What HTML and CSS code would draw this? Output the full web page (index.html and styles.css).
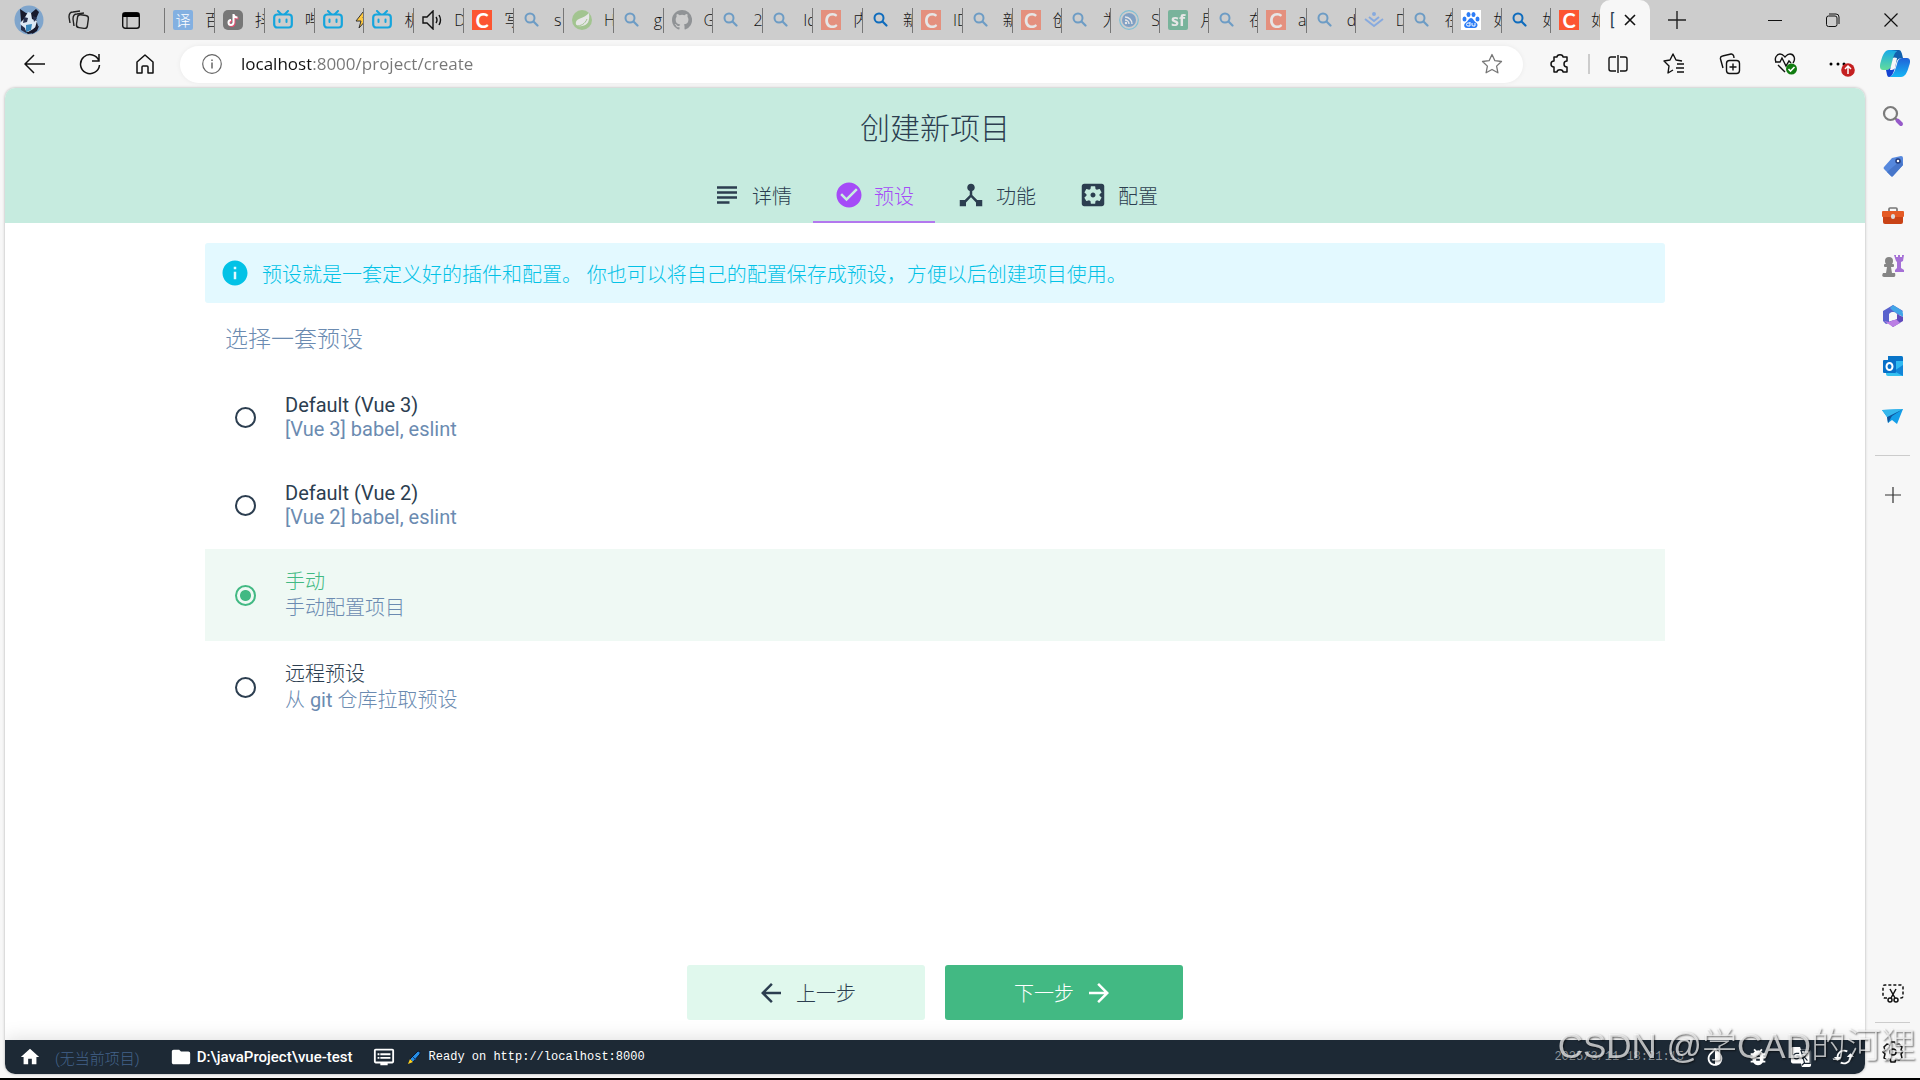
FILE: index.html
```html
<!DOCTYPE html>
<html lang="zh-CN">
<head>
	<meta charset="UTF-8">
	<meta name="viewport" content="width=device-width, initial-scale=1.0">
	<title>创建新项目</title>
	<link rel="stylesheet" href="styles.css">
</head>
<body>
<!-- 公用图标 -->
<svg class="sprite" aria-hidden="true">
	<symbol id="search" viewBox="0 0 20 20"><circle cx="8" cy="8" r="4.500" fill="none" stroke="currentColor" stroke-width="2"/><path d="M11.500 11.500l4 4" stroke="currentColor" stroke-width="2.200" stroke-linecap="round"/></symbol>
	<symbol id="bili" viewBox="0 0 20 20"><path d="M5 1l3 3M15 1l-3 3" stroke="#15a5dd" stroke-width="2" stroke-linecap="round"/><rect x="1.200" y="4.500" width="17.600" height="13" rx="3" fill="none" stroke="#15a5dd" stroke-width="2.200"/><path d="M6.500 9.500v2.500M13.500 9.500v2.500" stroke="#15a5dd" stroke-width="2" stroke-linecap="round"/></symbol>
</svg>

<div class="browser">
	<!-- 标签栏 -->
	<header class="tab-strip">
		<div class="strip-tools">
			<button class="tool" aria-label="用户"><svg width="30" height="30" viewBox="0 0 30 30"><circle cx="15" cy="15" r="14.500" fill="#7fa5cc"/><path d="M6 4l6 4 4 1 6-5 3 3-3 7 2 7-4 7-6 1-6-5-1-9z" fill="#17192b"/><path d="M14 7l3 1 1 6 5 2-2 7-7 4-5-3-3-6 4-4z" fill="#dce8f4"/><path d="M10 12l4 1-1 4-4 1zM19 11l4 2-3 4zM7 20l4 3 1 5-5-3z" fill="#27304e"/><path d="M12 20l6-1-1 6-5 2z" fill="#3987bc"/><path d="M20 23l5-2-2 5-5 3z" fill="#17192b"/></svg></button>
			<button class="tool" aria-label="工作区"><svg width="24" height="24" viewBox="0 0 24 24" fill="none" stroke="#222" stroke-width="1.400"><rect x="9" y="7" width="11" height="13" rx="3" transform="rotate(8 14 13)"/><path d="M6 18l-1-7c0-3 1-5 4-5l7-1M2 15L1 9c0-3 1-5 4-5l7-1"/></svg></button>
			<button class="tool" aria-label="标签页操作"><svg width="20" height="20" viewBox="0 0 20 20"><rect x="1.700" y="2.700" width="16.600" height="15.600" rx="2.500" fill="none" stroke="#111" stroke-width="1.400"/><path d="M2 3h16v4H2z"/><path d="M6 7v11" stroke="#111"/></svg></button>
		</div>
		<nav class="tabs">
			<button class="tab"><span class="fav translate">译</span>百</button>
			<button class="tab"><span class="fav tiktok"><svg width="20" height="20" viewBox="0 0 20 20" fill="none" stroke-width="2"><path d="M10.500 4v8.500a2.500 2.500 0 1 1-2.500-2.500M10.500 4.500c.5 2 2 3 4 3" stroke="#e35272" transform="translate(1 1)"/><path d="M10.500 4v8.500a2.500 2.500 0 1 1-2.500-2.500M10.500 4.500c.5 2 2 3 4 3" stroke="#fff"/></svg></span>抖</button>
			<button class="tab"><svg class="fav"><use href="#bili"/></svg>哔</button>
			<button class="tab"><svg class="fav"><use href="#bili"/></svg><svg class="bolt" viewBox="0 0 14 18"><path d="M8 1L1 10h5l-2 7 9-10H8l2-6z" fill="#ffc83d" stroke="#333"/></svg></button>
			<button class="tab"><svg class="fav"><use href="#bili"/></svg>机</button>
			<button class="tab"><svg class="fav" viewBox="0 0 20 20" fill="none" stroke="#111" stroke-width="1.400"><path d="M1 7h4l6-6v18l-6-6H1zM14 7q2 3 0 6M17 5q3 5 0 10"/></svg>D</button>
			<button class="tab"><span class="fav csdn">C</span>写</button>
			<button class="tab"><svg class="fav find dim"><use href="#search"/></svg>s</button>
			<button class="tab"><svg class="fav dim" viewBox="0 0 20 20"><circle cx="10" cy="10" r="10" fill="#79bd55"/><path d="M17 3c1 8-1 12-7 13-4 1-7-1-6-4 1-4 7-3 13-9z" fill="#fff"/><path d="M4 16c5 0 9-2 11-7" fill="none" stroke="#79bd55"/></svg>H</button>
			<button class="tab"><svg class="fav find dim"><use href="#search"/></svg>g</button>
			<button class="tab"><svg class="fav dim" viewBox="0 0 16 16"><path fill="#555b60" d="M8 0C3.580 0 0 3.580 0 8c0 3.540 2.290 6.530 5.470 7.590.4.070.55-.17.55-.38v-1.490c-2.010.37-2.530-.49-2.690-.94-.09-.23-.48-.94-.82-1.130-.28-.15-.68-.52-.01-.53.63-.01 1.080.58 1.230.82.72 1.210 1.870.87 2.330.66.070-.52.28-.87.51-1.070-1.780-.2-3.640-.89-3.640-3.950 0-.87.31-1.590.82-2.150-.08-.2-.36-1.020.08-2.120 0 0 .67-.21 2.200.82a7.600 7.600 0 0 1 4 0c1.530-1.040 2.200-.82 2.200-.82.44 1.100.16 1.920.08 2.120.51.56.82 1.270.82 2.150 0 3.070-1.870 3.750-3.650 3.950.29.25.54.73.54 1.480v2.200c0 .21.15.46.55.38A8 8 0 0 0 8 0z"/></svg>G</button>
			<button class="tab"><svg class="fav find dim"><use href="#search"/></svg>2</button>
			<button class="tab"><svg class="fav find dim"><use href="#search"/></svg>Id</button>
			<button class="tab"><span class="fav csdn dim">C</span>内</button>
			<button class="tab"><svg class="fav find"><use href="#search"/></svg>新</button>
			<button class="tab"><span class="fav csdn dim">C</span>ID</button>
			<button class="tab"><svg class="fav find dim"><use href="#search"/></svg>新</button>
			<button class="tab"><span class="fav csdn dim">C</span>创</button>
			<button class="tab narrow"><svg class="fav find dim"><use href="#search"/></svg>为</button>
			<button class="tab narrow"><svg class="fav dim" viewBox="0 0 20 20" fill="none"><circle cx="10" cy="10" r="9.300" stroke="#33b2dd" stroke-width="1.200"/><circle cx="10" cy="10" r="7" fill="#3575bd"/><path d="M6 10a4 4 0 0 1 4 4M6 7a7 7 0 0 1 7 7" stroke="#fff" stroke-width="1.400"/><circle cx="7" cy="13" r="1.200" fill="#fff"/></svg>S</button>
			<button class="tab narrow"><span class="fav sf dim">sf</span>月</button>
			<button class="tab narrow"><svg class="fav find dim"><use href="#search"/></svg>在</button>
			<button class="tab narrow"><span class="fav csdn dim">C</span>a</button>
			<button class="tab narrow"><svg class="fav find dim"><use href="#search"/></svg>d</button>
			<button class="tab narrow"><svg class="fav dim" viewBox="0 0 20 20" fill="none" stroke="#4488ef" stroke-width="2"><path d="M1 9l9 7 9-7M5 7l5 4 5-4"/><circle cx="10" cy="4" r="1" fill="#4488ef"/></svg>D</button>
			<button class="tab narrow"><svg class="fav find dim"><use href="#search"/></svg>在</button>
			<button class="tab narrow"><svg class="fav" viewBox="0 0 20 20"><path d="M0 0h20v20H0z" fill="#fff"/><g fill="#2d7df6"><ellipse cx="3.500" cy="9" rx="2" ry="2.500"/><ellipse cx="7.500" cy="4.500" rx="2" ry="2.500"/><ellipse cx="12.500" cy="4.500" rx="2" ry="2.500"/><ellipse cx="16.500" cy="9" rx="2" ry="2.500"/><path d="M10 8c2 0 3 3 5 4.500 3 2 1 5.500-1 5.500H6c-3 0-4-3.500-1-5.500C7 11 8 8 10 8z"/></g><path d="M9 12v4H7a1.500 1.500 0 0 1 0-3h2M11 13v2q0 1 1 1h2v-3" fill="none" stroke="#fff"/></svg>如</button>
			<button class="tab narrow"><svg class="fav find"><use href="#search"/></svg>如</button>
			<button class="tab narrow"><span class="fav csdn">C</span>如</button>
		</nav>
		<button class="tab-active"><span>[</span><svg width="12" height="12" viewBox="0 0 12 12"><path d="M1 1l10 10M11 1L1 11" stroke="#111" stroke-width="1.600"/></svg></button>
		<button class="new-tab" aria-label="新建标签页"><svg width="18" height="18" viewBox="0 0 18 18"><path d="M9 0v18M0 9h18" stroke="#222" stroke-width="1.400"/></svg></button>
		<div class="window-controls">
			<button class="tool" aria-label="最小化"><svg width="14" height="14" viewBox="0 0 14 14"><path d="M0 7.500h14" stroke="#111"/></svg></button>
			<button class="tool" aria-label="还原"><svg width="14" height="14" viewBox="0 0 14 14" fill="none" stroke="#111"><rect x=".5" y="3" width="10.500" height="10.500" rx="2"/><path d="M3 1h7q3 0 3 3v7"/></svg></button>
			<button class="tool" aria-label="关闭"><svg width="14" height="14" viewBox="0 0 14 14"><path d="M.5.5l13 13M13.500.5l-13 13" stroke="#111" stroke-width="1.200"/></svg></button>
		</div>
	</header>

	<!-- 地址栏 -->
	<div class="toolbar">
		<div class="nav-buttons">
			<button class="tool" aria-label="后退"><svg width="22" height="22" viewBox="0 0 22 22" fill="none" stroke="#111" stroke-width="1.500"><path d="M21 11H2M10 2l-9 9 9 9"/></svg></button>
			<button class="tool" aria-label="刷新"><svg width="22" height="22" viewBox="0 0 22 22" fill="none" stroke="#111" stroke-width="1.500"><path d="M20 8A9.500 9.500 0 1 0 20.500 12M20 1v7h-7"/></svg></button>
			<button class="tool" aria-label="主页"><svg width="20" height="20" viewBox="0 0 20 20" fill="none" stroke="#111" stroke-width="1.500"><path d="M2 8l8-7 8 7v11h-5v-6q0-1-1-1H8q-1 0-1 1v6H2z" stroke-linejoin="round"/></svg></button>
		</div>
		<div class="address">
			<svg width="20" height="20" viewBox="0 0 20 20" fill="none" stroke="#666" stroke-width="1.200"><circle cx="10" cy="10" r="9.300"/><path d="M10 8.500v6M10 5.500v1.500" stroke-width="1.500"/></svg>
			<input class="address-input" type="text" aria-label="地址" value="localhost:8000/project/create">
			<button class="tool" aria-label="收藏"><svg width="22" height="22" viewBox="0 0 22 22" fill="none" stroke="#777" stroke-width="1.300" stroke-linejoin="round"><path d="M11 1.500l2.900 6.200 6.600.8-4.900 4.600 1.300 6.700-5.900-3.300-5.900 3.300 1.300-6.700-4.900-4.600 6.600-.8z"/></svg></button>
		</div>
		<div class="toolbar-actions">
			<button class="tool" aria-label="扩展"><svg width="20" height="20" viewBox="0 0 20 20" fill="none" stroke="#111" stroke-width="1.500" stroke-linejoin="round"><path d="M4 3h3c0-3 6-3 6 0h4v4c-4 0-4 6 0 6v5h-4c0-3-6-3-6 0H4v-5c-4 0-4-6 0-6z"/></svg></button>
			<span class="divider"></span>
			<button class="tool" aria-label="分屏"><svg width="20" height="20" viewBox="0 0 20 20" fill="none" stroke="#111" stroke-width="1.400"><path d="M8 3H3Q1 3 1 5v10q0 2 2 2h5M12 3h5q2 0 2 2v10q0 2-2 2h-5M10 1v18"/></svg></button>
			<button class="tool" aria-label="收藏夹"><svg width="22" height="22" viewBox="0 0 22 22" fill="none" stroke="#111" stroke-width="1.400" stroke-linejoin="round"><path d="M10 17l-5 3 1-7-5-5 6-1 3-6 3 6 6 1M14 11h7M13 15h8M14 19h7"/></svg></button>
			<button class="tool" aria-label="集锦"><svg width="22" height="22" viewBox="0 0 22 22" fill="none" stroke="#111" stroke-width="1.400"><rect x="7.500" y="7.500" width="13" height="13" rx="3"/><path d="M14 10.500v7M10.500 14h7M4 15L1.500 6Q1 3.500 3.500 3L12 1q2-.3 2.700 2L15 5"/></svg></button>
			<button class="tool" aria-label="浏览器概要"><svg width="24" height="24" viewBox="0 0 24 24" fill="none" stroke="#111" stroke-width="1.400"><path d="M2 10C0 6 3 2 6 2c3 0 4 2 5 3 1-1 2-3 5-3 4 0 6 5 3 9M1 10h5l2-4 4 8 3-5 2 2M4 13l7 7"/><circle cx="17.500" cy="17" r="5.500" fill="#107c10" stroke="none"/><path d="M14.500 17l2 2 4-4" stroke="#fff" stroke-width="1.600"/></svg></button>
			<button class="tool" aria-label="设置及其他"><svg width="26" height="26" viewBox="0 0 26 26"><circle cx="2" cy="13" r="1.500"/><circle cx="9" cy="13" r="1.500"/><circle cx="15" cy="13" r="1.500"/><circle cx="19" cy="19" r="6.800" fill="#c42021"/><path d="M19 23v-8M16 18l3-3 3 3" fill="none" stroke="#fff" stroke-width="1.500"/></svg></button>
			<button class="tool copilot" aria-label="Copilot"><svg width="30" height="28" viewBox="0 0 30 28"><defs><linearGradient id="cp1" x2="0" y2="1"><stop stop-color="#16a9e8"/><stop offset="1" stop-color="#63dc9b"/></linearGradient><linearGradient id="cp2" x2="0" y2="1"><stop stop-color="#2062d8"/><stop offset="1" stop-color="#16b5f4"/></linearGradient></defs><path d="M9 0h10c-3 0-5 7-7 14-1 5-3 6-6 6H3c-3 0-4-3-2-9C3 4 5 0 9 0z" fill="url(#cp1)"/><path d="M21 27H9c4-1 6-6 8-13 1-5 3-6 6-6h4c3 0 4 3 2 8-2 7-4 11-8 11z" fill="url(#cp2)"/><path d="M11 0h8c2 0 3 3 4 8-5 0-6 2-7 6h-4C13 8 14 3 17 1z" fill="#1261ae"/><path d="M6 20c3 0 5-2 6-6h4c-2 8-4 13-7 13-2 0-2-3-3-7z" fill="#1444d2"/><path d="M13 8q1-1 4 0l-2 10q-1 2-5 2z" fill="#f7f7f7"/></svg></button>
		</div>
	</div>

	<div class="workspace">
		<main class="page">
			<!-- 向导标题和步骤 -->
			<div class="page-header">
				<h1 class="page-title">创建新项目</h1>
				<nav class="steps">
					<button class="step"><svg class="icon" viewBox="0 0 24 24"><path d="M14 17H4v2h10v-2zm6-8H4v2h16V9zM4 15h16v-2H4v2zM4 5v2h16V5H4z"/></svg>详情</button>
					<button class="step active"><svg class="icon" viewBox="0 0 24 24"><path d="M12 2C6.480 2 2 6.480 2 12s4.480 10 10 10 10-4.480 10-10S17.520 2 12 2zm-2 15l-5-5 1.410-1.410L10 14.170l7.590-7.590L19 8l-9 9z"/></svg>预设</button>
					<button class="step"><svg class="icon" viewBox="0 0 24 24"><path d="M17 16l-4-4V8.820C14.160 8.400 15 7.300 15 6c0-1.660-1.340-3-3-3S9 4.340 9 6c0 1.300.84 2.400 2 2.820V12l-4 4H3v5h5v-3.050l4-4.200 4 4.200V21h5v-5h-4z"/></svg>功能</button>
					<button class="step"><svg class="icon" viewBox="0 0 24 24"><path d="M12 10c-1.100 0-2 .9-2 2s.9 2 2 2 2-.9 2-2-.9-2-2-2zm7-7H5c-1.110 0-2 .9-2 2v14c0 1.100.89 2 2 2h14c1.110 0 2-.9 2-2V5c0-1.100-.89-2-2-2zm-1.750 9c0 .23-.02.46-.05.68l1.480 1.160c.13.11.17.3.08.45l-1.400 2.420c-.09.15-.27.21-.43.15l-1.740-.7c-.36.28-.76.51-1.180.69l-.26 1.850c-.03.17-.18.3-.35.3h-2.800c-.17 0-.32-.13-.35-.29l-.26-1.850c-.43-.18-.82-.41-1.180-.69l-1.740.7c-.16.06-.34 0-.43-.15l-1.400-2.420c-.09-.15-.05-.34.08-.45l1.480-1.160c-.03-.23-.05-.46-.05-.69 0-.23.02-.46.05-.68l-1.480-1.160c-.13-.11-.17-.3-.08-.45l1.400-2.420c.09-.15.27-.21.43-.15l1.740.7c.36-.28.76-.51 1.180-.69l.26-1.850c.03-.17.18-.3.35-.3h2.800c.17 0 .32.13.35.29l.26 1.850c.43.18.82.41 1.180.69l1.740-.7c.16-.06.34 0 .43.15l1.400 2.420c.09.15.05.34-.08.45l-1.480 1.160c.03.23.05.46.05.69z"/></svg>配置</button>
				</nav>
			</div>

			<!-- 预设列表 -->
			<div class="content">
				<div class="info-banner">
					<svg class="icon" viewBox="0 0 24 24"><path d="M12 2C6.480 2 2 6.480 2 12s4.480 10 10 10 10-4.480 10-10S17.520 2 12 2zm1 15h-2v-6h2v6zm0-8h-2V7h2v2z"/></svg>
					<span>预设就是一套定义好的插件和配置。 你也可以将自己的配置保存成预设，方便以后创建项目使用。</span>
				</div>
				<h2 class="list-title">选择一套预设</h2>
				<label class="preset latin">
					<input type="radio" name="preset">
					<span class="preset-text"><span class="preset-name">Default (Vue 3)</span><span class="preset-desc">[Vue 3] babel, eslint</span></span>
				</label>
				<label class="preset latin">
					<input type="radio" name="preset">
					<span class="preset-text"><span class="preset-name">Default (Vue 2)</span><span class="preset-desc">[Vue 2] babel, eslint</span></span>
				</label>
				<label class="preset selected">
					<input type="radio" name="preset" checked>
					<span class="preset-text"><span class="preset-name">手动</span><span class="preset-desc">手动配置项目</span></span>
				</label>
				<label class="preset">
					<input type="radio" name="preset">
					<span class="preset-text"><span class="preset-name">远程预设</span><span class="preset-desc">从 <span class="word">git</span> 仓库拉取预设</span></span>
				</label>
			</div>

			<div class="actions">
				<button class="action"><svg class="icon" viewBox="0 0 24 24"><path d="M20 11H7.830l5.590-5.590L12 4l-8 8 8 8 1.410-1.410L7.830 13H20v-2z"/></svg>上一步</button>
				<button class="action primary">下一步<svg class="icon" viewBox="0 0 24 24"><path d="M12 4l-1.410 1.410L16.170 11H4v2h12.170l-5.580 5.590L12 20l8-8z"/></svg></button>
			</div>

			<!-- 底部状态栏 -->
			<footer class="status-bar">
				<svg class="status-icon" viewBox="0 0 24 24"><path d="M10 20v-6h4v6h5v-8h3L12 3 2 12h3v8z"/></svg>
				<span class="no-project">(无当前项目)</span>
				<svg class="status-icon folder" viewBox="0 0 24 24"><path d="M10 4H4c-1.100 0-1.990.9-1.990 2L2 18c0 1.100.9 2 2 2h16c1.100 0 2-.9 2-2V8c0-1.100-.9-2-2-2h-8l-2-2z"/></svg>
				<span class="cwd">D:\javaProject\vue-test</span>
				<svg class="status-icon log" viewBox="0 0 24 24"><path d="M21 3H3c-1.100 0-2 .9-2 2v12c0 1.100.9 2 2 2h5v2h8v-2h5c1.100 0 1.990-.9 1.990-2L23 5c0-1.100-.9-2-2-2zm0 14H3V5h18v12zm-2-9H8v2h11V8zm0 4H8v2h11v-2zM7 8H5v2h2V8zm0 4H5v2h2v-2z"/></svg>
				<svg class="pen" viewBox="0 0 14 14"><path d="M3 9l8-8q3 0 2 3L6 12z" fill="#258de5" stroke="#0a1730"/><path d="M3 9l3 3-5 2z" fill="#ffd21e"/><path d="M6 7l3 3" stroke="#133b75"/></svg>
				<span class="mono">Ready on http://localhost:8000</span>
				<span class="mono log-date">2025/3/11 18:21:15</span>
				<div class="status-actions">
					<svg class="status-icon" viewBox="0 0 24 24"><path d="M17.660 7.930L12 2.270 6.340 7.930c-3.120 3.120-3.120 8.190 0 11.310C7.900 20.800 9.950 21.580 12 21.580c2.050 0 4.100-.78 5.660-2.340 3.120-3.120 3.120-8.190 0-11.310zM12 19.590c-1.600 0-3.110-.62-4.240-1.760C6.620 16.690 6 15.190 6 13.590s.62-3.110 1.760-4.240L12 5.100v14.490z"/></svg>
					<svg class="status-icon" viewBox="0 0 24 24"><path d="M20 8h-2.810c-.45-.78-1.070-1.450-1.820-1.960L17 4.410 15.590 3l-2.170 2.170C12.960 5.060 12.490 5 12 5c-.49 0-.96.06-1.410.17L8.410 3 7 4.410l1.620 1.630C7.880 6.550 7.260 7.220 6.810 8H4v2h2.090c-.05.33-.09.66-.09 1v1H4v2h2v1c0 .34.04.67.09 1H4v2h2.810c1.040 1.790 2.970 3 5.190 3s4.150-1.210 5.190-3H20v-2h-2.090c.05-.33.09-.66.09-1v-1h2v-2h-2v-1c0-.34-.04-.67-.09-1H20V8zm-6 8h-4v-2h4v2zm0-4h-4v-2h4v2z"/></svg>
					<svg class="status-icon" viewBox="0 0 24 24"><path d="M3 1h8l1 3h9q2 0 2 2v15q0 2-2 2h-8l-1-4H3q-2 0-2-2V3q0-2 2-2z"/><path d="M10 8H7a3 3 0 1 0 3 3H7M13 8h6M16 6v2M18 8c-1 4-3 5-5 6M14 10l5 6M13 21l3-3M12 5l4 14h6V5z" fill="none" stroke="#1d2935" stroke-width="1.300"/></svg>
					<svg class="status-icon" viewBox="0 0 24 24"><path d="M19 8l-4 4h3c0 3.310-2.690 6-6 6-1.010 0-1.970-.25-2.800-.7l-1.460 1.460C8.970 19.540 10.430 20 12 20c4.420 0 8-3.580 8-8h3l-4-4zM6 12c0-3.310 2.690-6 6-6 1.010 0 1.970.25 2.800.7l1.460-1.460C15.030 4.460 13.570 4 12 4c-4.420 0-8 3.580-8 8H1l4 4 4-4H6z"/></svg>
				</div>
			</footer>
		</main>

		<!-- 浏览器侧边栏 -->
		<aside class="sidebar">
			<div class="side-group">
				<button class="side-item" aria-label="搜索"><svg width="22" height="22" viewBox="0 0 22 22" fill="none"><circle cx="8.500" cy="8.500" r="6.500" stroke="#7b7b7b" stroke-width="2.200"/><path d="M13 13l3 3" stroke="#777" stroke-width="2"/><path d="M15.500 15.500l3.500 3.500" stroke="#965ac9" stroke-width="4" stroke-linecap="round"/></svg></button>
				<button class="side-item" aria-label="购物"><svg width="22" height="22" viewBox="0 0 22 22"><path d="M10 3l9-2q2 0 2 2v7L11 21q-1 1-2 0L2 14q-1-1 0-2z" fill="#5688dd"/><path d="M5 17L19 5l2 5-10 11q-1 1-2 0z" fill="#4776ca"/><circle cx="16" cy="6" r="2" fill="#fff" stroke="#243b79" stroke-width="1.500"/></svg></button>
				<button class="side-item" aria-label="工具"><svg width="22" height="22" viewBox="0 0 22 22"><path d="M7 6V4q0-1 1-1h6q1 0 1 1v2" fill="none" stroke="#777" stroke-width="1.700"/><rect y="6" width="22" height="6" rx="1" fill="#e55b25"/><path d="M1 12h20v5q0 2-2 2H3q-2 0-2-2z" fill="#c94316"/><rect x="9" y="9" width="4" height="5" rx="2" fill="#ddd"/></svg></button>
				<button class="side-item" aria-label="游戏"><svg width="22" height="22" viewBox="0 0 22 22"><g fill="#858585"><circle cx="7" cy="6" r="4"/><rect x="2" y="9" width="10" height="3" rx="1"/><path d="M5 12h4l1 6h3q1 4-1 4H2q-3 0-1-4h3z"/></g><path d="M12 0h2v2h2V0h2v2h2V0h2l-1 6-2 1v6l3 2v2h-9v-2l2-2V7l-1-1z" fill="#a570d6"/></svg></button>
				<button class="side-item" aria-label="Microsoft 365"><svg width="20" height="22" viewBox="0 0 20 22"><path d="M10 0l10 6-4 4-6-3-4 2v9l-3 1-3-3V6z" fill="#5962cd"/><path d="M10 0l8 5q2 1 2 4v3L10 6 7 3z" fill="#42a5e7"/><path d="M14 9l6 3v4L10 22l-5-5 9-3z" fill="#614abc"/><path d="M1 16l5 1 7-3 4 4-7 4z" fill="#bb7ee4"/><circle cx="10" cy="11" r="4" fill="#f7f7f7"/></svg></button>
				<button class="side-item" aria-label="Outlook"><svg width="20" height="20" viewBox="0 0 20 20"><path d="M5 0h13q2 0 2 2v18H5z" fill="#30baf2"/><path d="M5 0h13q2 0 2 2v3H5z" fill="#0874c8"/><path d="M20 9l-9 6 9 5z" fill="#1285d8"/><path d="M3 15l17 5H5q-2 0-2-2z" fill="#37c2ef"/><rect y="4" width="13" height="13" rx="1" fill="#0870c8"/><ellipse cx="6.500" cy="10.500" rx="3" ry="3.500" fill="none" stroke="#fff" stroke-width="2"/></svg></button>
				<button class="side-item" aria-label="Drop"><svg width="22" height="22" viewBox="0 0 22 22"><path d="M0 5l21-1-6 15-5-4-4 3-1-6z" fill="#149ee8"/><path d="M21 4L5 12l1 6 4-7z" fill="#13549b"/><path d="M0 5l21-1L5 12z" fill="#36b7ec"/></svg></button>
				<span class="side-line"></span>
				<button class="side-item" aria-label="自定义"><svg width="16" height="16" viewBox="0 0 16 16"><path d="M8 0v16M0 8h16" stroke="#333" stroke-width="1.200"/></svg></button>
			</div>
			<div class="side-group bottom">
				<button class="side-item" aria-label="屏幕截图"><svg width="22" height="20" viewBox="0 0 22 20" fill="none" stroke="#111" stroke-width="1.500"><path d="M5 15H3q-2 0-2-2V4q0-2 2-2h16q2 0 2 2v9q0 2-2 2h-2" stroke-dasharray="3 2"/><path d="M8 6l5 9M14 6l-5 9"/><circle cx="8" cy="17" r="2"/><circle cx="14" cy="17" r="2"/></svg></button>
				<span class="side-line"></span>
				<button class="side-item" aria-label="设置"><svg width="22" height="22" viewBox="0 0 22 22" fill="none" stroke="#111" stroke-width="1.500"><path d="M9 1h4l1 3 3-1 3 3-1 3 2 2-2 2 1 4-3 2-3-1-1 3H9l-1-3-3 1-3-2 1-4-2-2 2-2-1-3 3-3 3 1z"/><circle cx="11" cy="11" r="3"/></svg></button>
			</div>
		</aside>
	</div>
</div>
<div class="watermark">CSDN @学CAD的河狸</div>
</body>
</html>
```
FILE: styles.css
```css
* {
	box-sizing: border-box;
}
body {
	margin: 0;
	font-family: Roboto, "Noto Sans CJK SC", sans-serif;
	font-size: 20px;
	color: #2c3e50;
	background-color: #f7f7f7;
}
button {
	display: flex;
	align-items: center;
	justify-content: center;
	padding: 0;
	border: none;
	background: none;
	font: inherit;
	color: inherit;
	cursor: pointer;
}
svg {
	flex: none;
}
.sprite {
	position: absolute;
	width: 0;
	height: 0;
}
.browser {
	display: flex;
	flex-direction: column;
	min-height: 100vh;
	border-bottom: 2px solid #000;
}

/* 标签栏 */
.tab-strip {
	display: flex;
	align-items: center;
	height: 40px;
	background-color: #cdcdcd;
}
.strip-tools {
	display: flex;
	align-items: center;
	width: 165px;
	height: 25px;
	padding-left: 3px;
	border-right: 1px solid #777;
}
.strip-tools .tool {
	width: 51px;
}
.tabs {
	display: flex;
	flex: 0 1 1435px;
	min-width: 0;
}
.tab {
	flex: 0 1 50px;
	min-width: 0;
	height: 25px;
	padding-left: 8px;
	gap: 12px;
	justify-content: flex-start;
	overflow: hidden;
	border-right: 1px solid #777;
	font-family: "Open Sans", "Noto Sans CJK SC", sans-serif;
	font-size: 16px;
	font-weight: 300;
	line-height: 24px;
	color: #111;
	white-space: nowrap;
}
.tab.narrow {
	flex-basis: 49px;
}
.tab:last-child {
	border-right: none;
}
.fav {
	flex: none;
	width: 20px;
	height: 20px;
	line-height: 20px;
	text-align: center;
	color: #fff;
}
.find {
	color: #0f6cbd;
}
.dim {
	opacity: .5;
}
.bolt {
	width: 14px;
	height: 18px;
}
.translate {
	border-radius: 2px;
	background-color: #83b0e1;
	font-size: 15px;
}
.tiktok {
	border-radius: 5px;
	background-color: #777;
}
.csdn {
	background-color: #fc5531;
	font-family: Lato, sans-serif;
	font-size: 20px;
	font-weight: 700;
}
.sf {
	border-radius: 2px;
	background-color: #259b6a;
	font-weight: 700;
}
.tab-active {
	width: 50px;
	height: 40px;
	gap: 10px;
	padding-right: 4px;
	border-radius: 10px 10px 0 0;
	background-color: #f7f7f7;
	font-size: 16px;
}
.new-tab {
	width: 54px;
	height: 40px;
}
.window-controls {
	display: flex;
	margin-left: auto;
}
.window-controls .tool {
	width: 58px;
	height: 40px;
}

/* 地址栏 */
.toolbar {
	display: flex;
	align-items: center;
	height: 48px;
}
.nav-buttons {
	display: flex;
	width: 180px;
	padding-left: 7px;
}
.nav-buttons .tool {
	width: 55px;
	height: 40px;
}
.address {
	display: flex;
	flex: 1;
	align-items: center;
	gap: 19px;
	height: 37px;
	padding: 0 20px 0 22px;
	border-radius: 19px;
	background-color: #fff;
	box-shadow: 0 0 5px rgba(0, 0, 0, .06);
}
.address-input {
	flex: 1;
	padding: 0;
	border: none;
	outline: none;
	background: linear-gradient(to right, #111 70px, #767676 70px);
	background-clip: text;
	-webkit-background-clip: text;
	-webkit-text-fill-color: transparent;
	font-family: "Open Sans", sans-serif;
	font-size: 17px;
	line-height: 24px;
	color: #767676;
}
.toolbar-actions {
	display: flex;
	align-items: center;
	width: 397px;
	padding-left: 9px;
}
.toolbar-actions .tool {
	width: 56px;
	height: 40px;
}
.toolbar-actions .copilot {
	width: 50px;
}
.divider {
	width: 2px;
	height: 20px;
	background-color: #ccc;
}

/* 页面区域 */
.workspace {
	display: flex;
	flex: 1;
}
.page {
	display: flex;
	flex: 1;
	flex-direction: column;
	margin: 0 0 4px 5px;
	border-radius: 10px;
	overflow: hidden;
	background-color: #fff;
	box-shadow: 0 0 3px rgba(0, 0, 0, .3);
}
.page-header {
	display: flex;
	flex-direction: column;
	align-items: center;
	background-color: #c6ebdf;
}
.page-title {
	margin: 0;
	padding: 18px 0;
	font-size: 30px;
	font-weight: 300;
	line-height: 45px;
}
.steps {
	display: flex;
}
.step {
	width: 122px;
	height: 54px;
	gap: 10px;
	border-bottom: 2px solid transparent;
	font-weight: 300;
}
.step.active {
	border-bottom-color: #b377ee;
	color: #a54bf7;
}
.icon {
	width: 30px;
	height: 30px;
	fill: currentColor;
}
.content {
	display: flex;
	flex: 1;
	flex-direction: column;
	width: 100%;
	max-width: 1500px;
	margin: 0 auto;
	padding: 20px;
}
.info-banner {
	display: flex;
	align-items: center;
	gap: 12px;
	height: 60px;
	padding: 0 15px;
	border-radius: 3px;
	background-color: #e3f9ff;
	font-weight: 300;
	color: #03c2e6;
}
.list-title {
	margin: 20px 20px 16px;
	font-size: 23px;
	font-weight: 300;
	line-height: 34px;
	color: #6b8bb1;
}
.preset {
	display: flex;
	align-items: center;
	gap: 29px;
	padding: 20px 30px;
	line-height: 26px;
	cursor: pointer;
}
.preset.latin {
	line-height: 24px;
}
.preset input {
	appearance: none;
	width: 21px;
	height: 21px;
	margin: 0;
	border: 2px solid #2c3e50;
	border-radius: 50%;
}
.preset input:checked {
	border-color: #42b983;
	background: radial-gradient(circle, #42b983 5px, transparent 6px);
}
.preset-text {
	display: flex;
	flex-direction: column;
}
.preset-name,
.preset-desc {
	font-weight: 300;
}
.latin .preset-name,
.latin .preset-desc,
.word {
	font-weight: 400;
}
.preset-desc {
	color: #6b8bb1;
}
.preset.selected {
	background-color: #eff9f4;
}
.selected .preset-name {
	color: #42b983;
}
.actions {
	display: flex;
	justify-content: center;
	gap: 20px;
	padding: 20px;
}
.action {
	width: 238px;
	height: 55px;
	gap: 10px;
	border-radius: 3px;
	background-color: #e0f8ed;
	font-weight: 300;
}
.action.primary {
	background-color: #42b983;
	color: #fff;
}

/* 状态栏 */
.status-bar {
	display: flex;
	align-items: center;
	height: 34px;
	padding: 0 10px;
	background-color: #1d2935;
	box-shadow: 0 0 20px rgba(0, 0, 0, .15);
	font-size: 15px;
	color: #fff;
}
.status-icon {
	width: 22px;
	height: 22px;
	fill: currentColor;
}
.status-icon:first-child {
	margin-left: 4px;
}
.no-project {
	margin-left: 14px;
	font-weight: 300;
	color: #42628a;
}
.folder {
	margin-left: 30px;
}
.cwd {
	margin-left: 5px;
	font-weight: 500;
}
.log {
	margin-left: 20px;
}
.pen {
	width: 14px;
	height: 14px;
	margin: 0 8px 0 12px;
}
.mono {
	font-family: "Liberation Mono", monospace;
	font-size: 12px;
}
.log-date {
	margin-left: auto;
	color: #8d949a;
}
.status-actions {
	display: flex;
	gap: 21px;
	margin-left: 16px;
}

/* 侧边栏 */
.sidebar {
	display: flex;
	flex-direction: column;
	justify-content: space-between;
	width: 55px;
}
.side-group {
	display: flex;
	flex-direction: column;
	align-items: center;
	padding: 3px 0;
}
.side-item {
	width: 50px;
	height: 50px;
}
.side-line {
	width: 35px;
	height: 1px;
	margin: 14px 0;
	background-color: #ccc;
}
.bottom {
	padding-bottom: 1px;
}
.bottom .side-line {
	margin: 4px 0;
}
.watermark {
	position: fixed;
	right: 4px;
	bottom: 10px;
	font-family: "Liberation Sans", "Noto Sans CJK SC", sans-serif;
	font-size: 35px;
	font-weight: 300;
	line-height: 48px;
	color: rgba(255, 255, 255, .7);
	text-shadow: 1px 1px 2px rgba(0, 0, 0, .6);
	pointer-events: none;
}
```
